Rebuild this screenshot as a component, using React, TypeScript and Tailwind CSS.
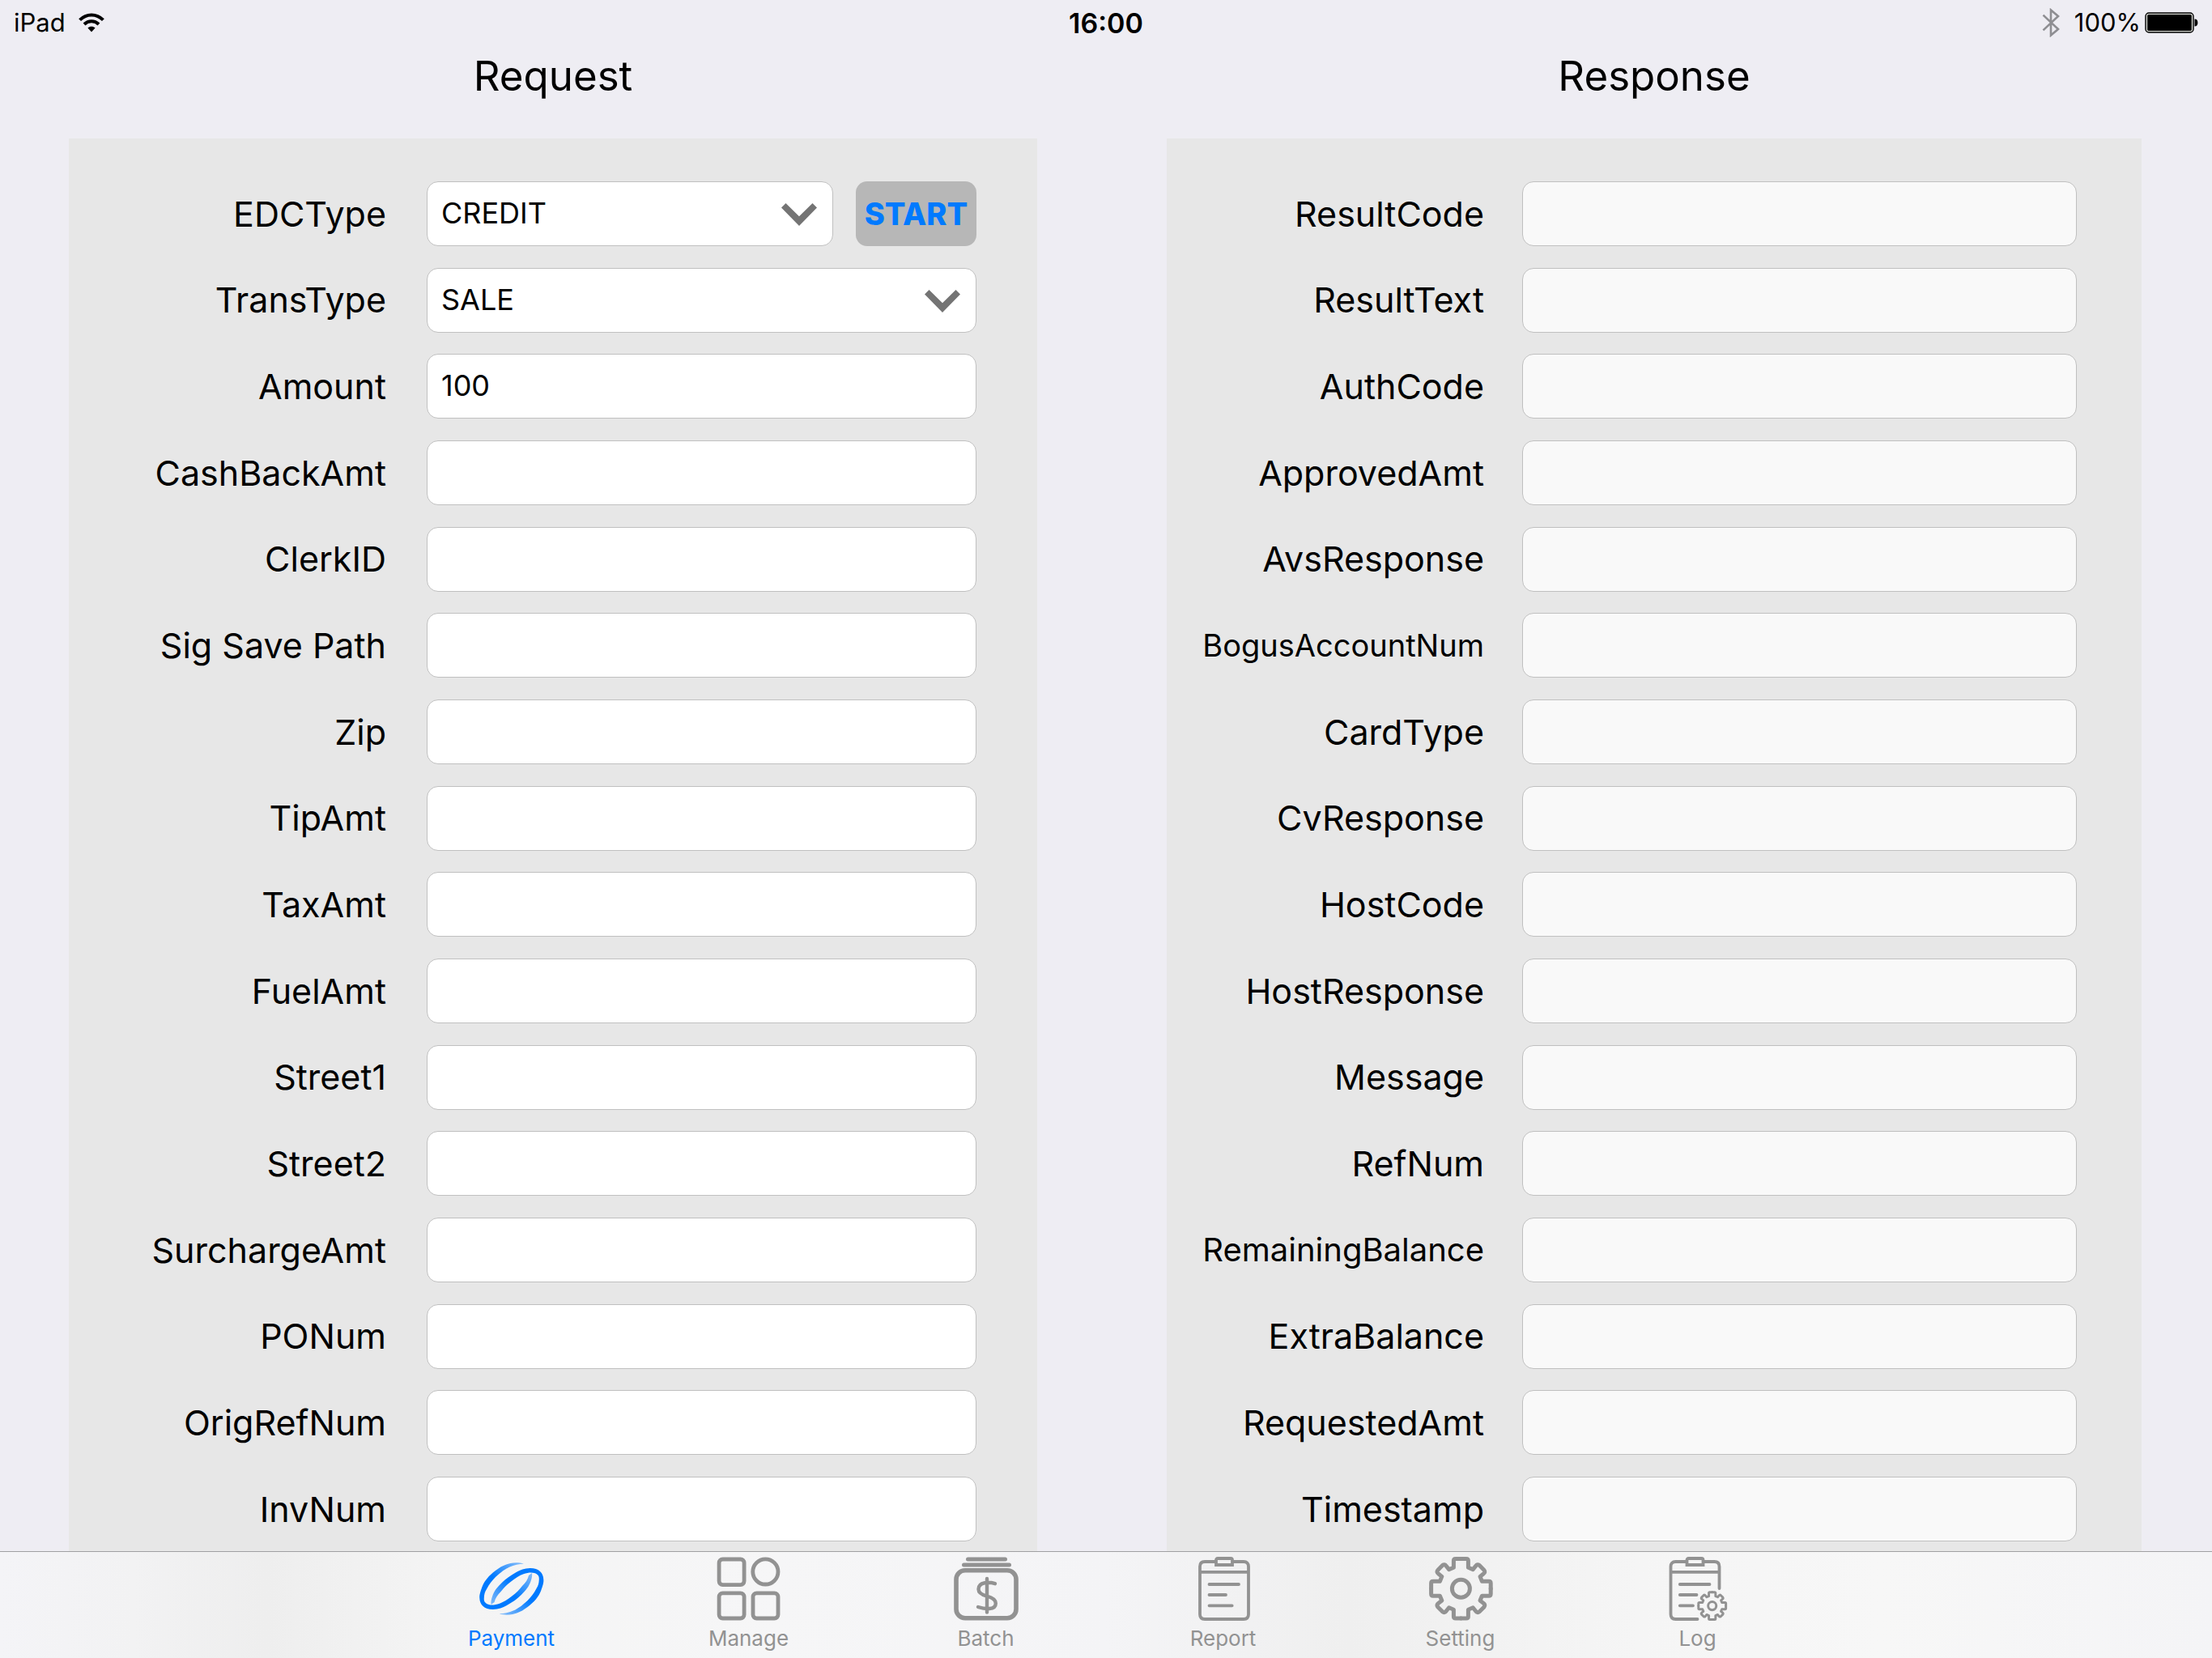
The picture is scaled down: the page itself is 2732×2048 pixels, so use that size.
import React from "react";
import clsx from "clsx";

type Field = {
  name: string;
  value?: string;
  options?: string[];
  action?: string;
  labelSize?: string;
};

const requestFields: Field[] = [
  {
    name: "EDCType",
    options: ["CREDIT", "DEBIT", "EBT", "GIFT", "CASH"],
    action: "START",
  },
  { name: "TransType", options: ["SALE", "RETURN", "AUTH", "VOID"] },
  { name: "Amount", value: "100" },
  { name: "CashBackAmt" },
  { name: "ClerkID" },
  { name: "Sig Save Path" },
  { name: "Zip" },
  { name: "TipAmt" },
  { name: "TaxAmt" },
  { name: "FuelAmt" },
  { name: "Street1" },
  { name: "Street2" },
  { name: "SurchargeAmt" },
  { name: "PONum" },
  { name: "OrigRefNum" },
  { name: "InvNum" },
];

const responseFields: Field[] = [
  { name: "ResultCode" },
  { name: "ResultText" },
  { name: "AuthCode" },
  { name: "ApprovedAmt" },
  { name: "AvsResponse" },
  { name: "BogusAccountNum", labelSize: "text-[38px]" },
  { name: "CardType" },
  { name: "CvResponse" },
  { name: "HostCode" },
  { name: "HostResponse" },
  { name: "Message" },
  { name: "RefNum" },
  { name: "RemainingBalance", labelSize: "text-[40px]" },
  { name: "ExtraBalance" },
  { name: "RequestedAmt" },
  { name: "Timestamp" },
];

const WifiIcon = () => (
  <svg className="w-8 h-6" viewBox="0 0 32 24" fill="none" stroke="#000">
    <path d="M1.6 8.6C9.8 .3 22.2 .3 30.4 8.6" strokeWidth="4" />
    <path d="M7 14C12.2 9 19.8 9 25 14" strokeWidth="4" />
    <path
      d="M16 23.6L11.4 18.6C14 16.2 18 16.2 20.6 18.6Z"
      fill="#000"
      stroke="none"
    />
  </svg>
);

const BluetoothIcon = () => (
  <svg
    className="w-[22px] h-9"
    viewBox="0 0 22 36"
    fill="none"
    stroke="#8e8e92"
    strokeWidth="2.6"
  >
    <path d="M1.5 8.6L20 26L11 33.6V2.4L20 10L1.5 27.4" />
  </svg>
);

const BatteryIcon = () => (
  <svg className="w-[66px] h-[26px]" viewBox="0 0 66 26">
    <rect
      x="1"
      y="1"
      width="59"
      height="24"
      rx="4"
      fill="#d4d6d0"
      stroke="#000"
      strokeWidth="1.4"
    />
    <rect x="3.2" y="3" width="54.6" height="20" rx="1.5" />
    <path d="M61.5 8.4C64.4 8.4 65.4 10.4 65.4 13C65.4 15.6 64.4 17.6 61.5 17.6Z" />
  </svg>
);

const Chevron = () => (
  <svg
    className="absolute right-5 top-[27px] w-11 h-7 pointer-events-none"
    viewBox="0 0 44 28"
    fill="#747474"
  >
    <path d="M5.5 0L22 16.3L38.5 0L44 5.6L22 28L0 5.6Z" />
  </svg>
);

const ribbon =
  "M55 9.7C50 8 44 7.8 38.5 9C31 10.7 26 13.5 20 18C12 24 6 31 3.5 38C1 45 0 48 .3 52C.5 60 6 66 16.8 66C24 65.5 29 64 33.5 61.3C41 57 47 53 51.8 48C58 42 61 38 63.5 31.3C65 27 65.5 24 65 21L61 24C60 29 57 33 53 37C49 42 46 45.5 41 49C35 53.5 30 57 25 58.7C20 60.5 15 61 11.8 60C7 58.5 5.5 56 5.8 52C6 47 7 44 9 41C12 35 15.5 30.5 20 26C27 19.5 32 16 37 13.7C43 11 49 10 55 9.7Z";

const PaymentIcon = () => (
  <svg className="w-20 h-20" viewBox="0 0 80 80" fill="url(#ribbon)">
    <linearGradient id="ribbon" x1="0.45" y1="0.5" x2="0.95" y2="0">
      <stop offset="0" stopColor="#007aff" />
      <stop offset="1" stopColor="#007aff" stopOpacity="0.35" />
    </linearGradient>
    <path d={ribbon} />
    <path d={ribbon} transform="rotate(180 39.8 40.5)" />
  </svg>
);

const ManageIcon = () => (
  <svg
    className="w-20 h-20"
    viewBox="0 0 80 80"
    fill="none"
    stroke="currentColor"
    strokeWidth="4.8"
  >
    <rect x="3.1" y="4" width="31" height="31.6" rx="4.5" />
    <circle cx="60.4" cy="19.4" r="15.6" />
    <rect x="3.1" y="45.8" width="31" height="31.2" rx="4.5" />
    <rect x="45" y="45.8" width="31" height="31.2" rx="4.5" />
  </svg>
);

const BatchIcon = () => (
  <svg
    className="w-20 h-20"
    viewBox="0 0 80 80"
    fill="none"
    stroke="currentColor"
    strokeWidth="5"
    strokeLinecap="round"
  >
    <path d="M17.5 4H63.5M12.5 11H68.5" />
    <rect x="3" y="17.8" width="74" height="59" rx="11" strokeWidth="5.6" />
    <path
      d="M41 28V69.5M51 34.2C44 32 30.5 31.5 30.5 41C30.5 46.5 36 48.3 41 49.6C47 51.2 51.8 53.5 51.8 58.5C51.8 67.5 38 65.5 30 63"
      strokeWidth="4.4"
    />
  </svg>
);

const ReportIcon = () => (
  <svg
    className="w-20 h-20"
    viewBox="0 0 80 80"
    fill="none"
    stroke="currentColor"
    strokeWidth="3.8"
    strokeLinecap="round"
  >
    <path d="M29 7H17Q11 7 11 13V72Q11 78 17 78H65Q71 78 71 72V13Q71 7 65 7H53M11 19.8H71" />
    <path d="M31 11V5Q31 3 33 3H49Q51 3 51 5V11Z" />
    <path d="M22.5 35H59M22.5 48H43M22.5 61.3H50.7" />
  </svg>
);

const Cog = () => (
  <>
    {[0, 90, 180, 270].map((angle) => (
      <path
        key={angle}
        transform={`rotate(${angle})`}
        d="M0 -36.8H6.5Q9 -36.8 9 -34.5V-26L14.8 -23.6L18.2 -27.8Q20.2 -30.6 22.8 -28.6L28.6 -22.8Q30.6 -20.2 27.8 -18.2L23.6 -14.8L26 -9H34.5Q36.8 -9 36.8 -6.5V0"
      />
    ))}
    <circle r="11" />
  </>
);

const SettingIcon = () => (
  <svg
    className="w-20 h-20"
    viewBox="0 0 80 80"
    fill="none"
    stroke="currentColor"
    strokeWidth="5"
    strokeLinecap="round"
    strokeLinejoin="round"
  >
    <g transform="translate(40.4 40.2)">
      <Cog />
    </g>
  </svg>
);

const LogIcon = () => (
  <svg
    className="w-20 h-20"
    viewBox="0 0 80 80"
    fill="none"
    stroke="currentColor"
    strokeWidth="3.8"
    strokeLinecap="round"
  >
    <path d="M25 7H12.5Q6.5 7 6.5 13V72Q6.5 78 12.5 78H39.5M48 7H60.5Q66.5 7 66.5 13V40M6.5 19.8H66.5" />
    <path d="M26.5 11V5Q26.5 3 28.5 3H44.5Q46.5 3 46.5 5V11Z" />
    <path d="M17.8 35H54.5M17.8 48H38.5M17.8 61.3H34" />
    <g
      transform="translate(57.7 61.6) scale(0.46)"
      strokeWidth="6.4"
      strokeLinejoin="round"
    >
      <Cog />
    </g>
  </svg>
);

const tabs = [
  { name: "Payment", icon: PaymentIcon },
  { name: "Manage", icon: ManageIcon },
  { name: "Batch", icon: BatchIcon },
  { name: "Report", icon: ReportIcon },
  { name: "Setting", icon: SettingIcon },
  { name: "Log", icon: LogIcon },
];

const control =
  "w-full h-20 px-[17px] pb-0.5 rounded-[14px] border border-[#c0c0c0] text-4xl text-black outline-none";

type RowProps = {
  field: Field;
  readOnly?: boolean;
};

const Row = ({ field, readOnly }: RowProps) => {
  const id = field.name.replace(/ /g, "");
  return (
    <div
      className={clsx(
        "flex items-center",
        readOnly ? "gap-[47px]" : "gap-[50px]"
      )}
    >
      <label
        htmlFor={id}
        className={clsx(
          "w-[392px] shrink-0 text-right whitespace-nowrap",
          field.labelSize ?? "text-[43px]"
        )}
      >
        {field.name}
      </label>
      <div className="flex flex-1 gap-7">
        {field.options ? (
          <div className="relative flex-1">
            <select
              id={id}
              className={clsx(control, "appearance-none bg-white")}
            >
              {field.options.map((option) => (
                <option key={option}>{option}</option>
              ))}
            </select>
            <Chevron />
          </div>
        ) : (
          <input
            id={id}
            type="text"
            defaultValue={field.value}
            readOnly={readOnly}
            className={clsx(control, readOnly ? "bg-[#f9f9f9]" : "bg-white")}
          />
        )}
        {field.action && (
          <button
            type="button"
            className="w-[149px] h-20 rounded-[14px] bg-[#b7b7b7] text-[38px] font-extrabold text-[#007aff]"
          >
            {field.action}
          </button>
        )}
      </div>
    </div>
  );
};

type PanelProps = {
  title: string;
  fields: Field[];
  readOnly?: boolean;
};

const Panel = ({ title, fields, readOnly }: PanelProps) => {
  return (
    <section className="flex flex-col">
      <h1 className="text-[51px] leading-[76px] text-center mb-[39px]">
        {title}
      </h1>
      <form
        className={clsx(
          "flex flex-1 flex-col justify-between bg-[#e7e7e7] pt-[53px] pb-3",
          readOnly ? "pr-20" : "pr-[75px]"
        )}
      >
        {fields.map((field) => (
          <Row key={field.name} field={field} readOnly={readOnly} />
        ))}
      </form>
    </section>
  );
};

const StatusBar = () => {
  return (
    <header className="grid grid-cols-[1fr_auto_1fr] items-center h-14 px-[17px] text-[31px]">
      <div className="flex items-center gap-4">
        <span>iPad</span>
        <WifiIcon />
      </div>
      <span className="text-[34px] font-semibold">16:00</span>
      <div className="flex items-center justify-end">
        <BluetoothIcon />
        <span className="ml-[18px] mr-[5px]">100%</span>
        <BatteryIcon />
      </div>
    </header>
  );
};

const TabBar = () => {
  return (
    <nav className="flex justify-center border-t border-[#a0a0a2] bg-[linear-gradient(90deg,#f4f4f7,#f2f2f3_6%,#eeeeee_12%,#f4f4f4_20%,#f6f6f7_35%,#f4f4f6_50%,#efefef_61%,#f5f5f5_74%,#f7f7f7_85%,#f4f4f6)] pt-[5px] pr-1 pb-2">
      {tabs.map(({ name, icon: Icon }, i) => (
        <a
          key={name}
          href={`#${name.toLowerCase()}`}
          className={clsx(
            "flex flex-col items-center gap-1.5 w-[293px] text-[26px] leading-8",
            i === 0 ? "text-[#007aff]" : "text-[#929292]"
          )}
        >
          <Icon />
          {name}
        </a>
      ))}
    </nav>
  );
};

const App = () => {
  return (
    <div className="flex flex-col min-h-screen bg-[#eeedf3] text-black font-['Inter','Liberation_Sans',sans-serif]">
      <StatusBar />
      <main className="grid flex-1 grid-cols-[1196fr_1204fr] gap-40 pl-[85px] pr-[87px]">
        <Panel title="Request" fields={requestFields} />
        <Panel title="Response" fields={responseFields} readOnly />
      </main>
      <TabBar />
    </div>
  );
};

export default App;
